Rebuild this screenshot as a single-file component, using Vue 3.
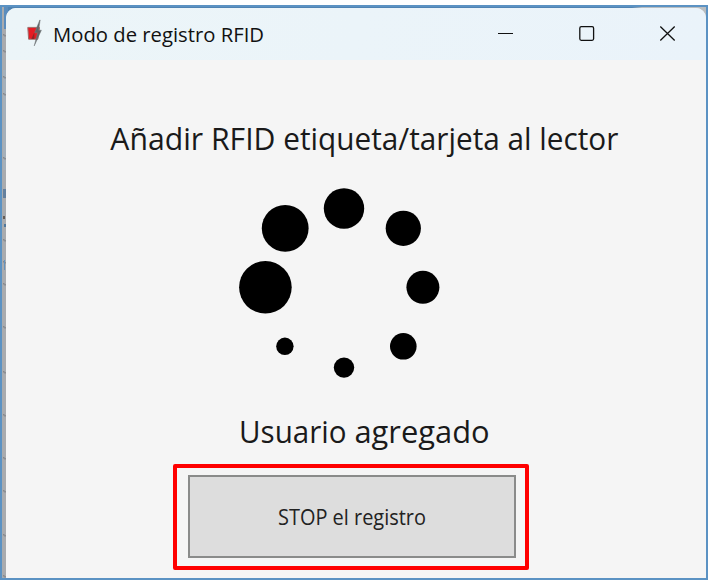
<script setup>
const dots = [
  { x: 344, y: 208.5, r: 20.2 },
  { x: 403.3, y: 228.3, r: 17.6 },
  { x: 422.9, y: 287.3, r: 16.5 },
  { x: 403.3, y: 346.3, r: 13.3 },
  { x: 344, y: 367.6, r: 10.2 },
  { x: 284.9, y: 346.3, r: 8.7 },
  { x: 265.4, y: 287.3, r: 26.3 },
  { x: 285.2, y: 228.3, r: 23.4 },
]
const specks = [34, 50, 76, 93, 157, 239, 261, 283, 326, 371, 414, 457, 490, 534, 575]
const heading = [
  { text: 'Añadir RFID', x: 10.3, w: 165.2 },
  { text: 'etiqueta/tarjeta al lector', x: 183.2, w: 335.2 },
]
const status = [
  { text: 'Usuario', x: 6, w: 107.5 },
  { text: 'agregado', x: 121.4, w: 135.2 },
]
</script>

<template>
  <div class="screen">
    <div class="frame">
      <div class="backdrop">
        <svg class="edge" width="6" height="571" viewBox="2 7 6 571" aria-hidden="true">
          <rect x="2" y="7" width="6" height="571" fill="#a9abae" />
          <rect x="4" y="7" width="4" height="22" fill="#5b8dbd" />
          <rect x="3" y="70" width="3" height="100" fill="#a5b0ba" />
          <g v-for="y in specks" :key="y">
            <rect x="3" :y="y" width="1.5" height="1.5" fill="#85878a" />
            <rect x="4.3" :y="y + 1" width="1.5" height="1.5" fill="#85878c" />
          </g>
          <rect x="3" y="189" width="3" height="9" fill="#64809e" />
          <rect x="3" y="216" width="2" height="3" fill="#665d56" />
          <rect x="4" y="224" width="2" height="3" fill="#50779b" />
          <rect x="4" y="260" width="1" height="10" fill="#6693bd" />
        </svg>
        <div class="window">
          <header class="titlebar">
            <svg class="logo" width="17" height="28" viewBox="26 19 17 28" aria-hidden="true">
              <path d="M27.8 27.4H39.5L37.8 39.2H28.6Z" fill="#e51c24" stroke="#9c706d" stroke-width="1" />
              <path d="M39.8 20L34.6 32.8H37.6L34.2 46L41.4 30.2H38.6L40.2 20Z" fill="#606466" stroke="#777c7e" stroke-width=".5" />
              <path d="M31.3 39L34.3 32.5V39Z" fill="#8d2629" />
            </svg>
            <svg class="title" width="220" height="34">
              <text x="10" y="25" font-size="20" textLength="211" lengthAdjust="spacingAndGlyphs">Modo de registro RFID</text>
            </svg>
            <svg class="controls" width="180" height="28" viewBox="497 19 180 28" fill="none" stroke="#111" stroke-width="1.3" aria-hidden="true">
              <path d="M498 33.5H513" stroke-width="1" />
              <rect x="579.8" y="26.7" width="13.8" height="13.6" rx="1.5" />
              <path d="M660.3 26.5L674.7 40.5M674.7 26.5L660.3 40.5" />
            </svg>
          </header>
          <main class="content">
            <svg class="heading" width="560" height="50">
              <text v-for="p in heading" :key="p.text" :x="p.x" y="35.3" font-size="31.4" :textLength="p.w" lengthAdjust="spacingAndGlyphs">{{ p.text }}</text>
            </svg>
            <svg class="spinner" width="210" height="200" viewBox="234 183 210 200" aria-hidden="true">
              <circle v-for="d in dots" :key="d.x + '-' + d.y" :cx="d.x" :cy="d.y" :r="d.r" />
            </svg>
            <svg class="status" width="290" height="46">
              <text v-for="p in status" :key="p.text" :x="p.x" y="34.8" font-size="31.2" :textLength="p.w" lengthAdjust="spacingAndGlyphs">{{ p.text }}</text>
            </svg>
            <div class="highlight">
              <button class="stop" type="button">
                <svg width="184" height="44">
                  <text x="18" y="29.5" font-size="21.3" textLength="148" lengthAdjust="spacingAndGlyphs">STOP el registro</text>
                </svg>
              </button>
            </div>
          </main>
        </div>
      </div>
    </div>
  </div>
</template>

<style>
body {
  background: #fff;
  overflow: hidden;
}
</style>

<style scoped>
.screen {
  box-sizing: border-box;
  width: 709px;
  height: 586px;
  padding: 5px 1px 6px 0;
  background: #fff;
  font-family: "Open Sans", "Noto Sans", sans-serif;
}
svg {
  display: block;
  flex: none;
  overflow: visible;
}
.frame {
  box-sizing: border-box;
  height: 575px;
  border: 2px solid #5b92c3;
}
.backdrop {
  display: flex;
  height: 571px;
  background: linear-gradient(90deg, #4f83b3 0 630px, #b9bdc0 640px);
}
.edge {
  margin-right: -2px;
}
.window {
  flex: 1;
  margin-top: 1px;
  border-radius: 10px 10px 0 0;
  overflow: hidden;
  background: #f5f5f5;
  position: relative;
}
.titlebar {
  display: flex;
  height: 52px;
  background: linear-gradient(100deg, #ecf5f8, #eaf3fa);
}
.logo {
  margin: 11px 0 0 20px;
}
.title {
  margin: 9px 0 0 0;
  fill: #111;
}
.controls {
  margin: 11px 0 0 234px;
}
.content {
  display: flex;
  flex-direction: column;
  align-items: flex-start;
  fill: #1a1a1a;
}
.heading {
  margin: 55px 0 0 94px;
}
.spinner {
  margin: 18px 0 0 228px;
  fill: #000;
}
.status {
  margin: 25px 0 0 227px;
}
.highlight {
  box-sizing: border-box;
  width: 356px;
  height: 106px;
  margin: 10px 0 0 167px;
  padding: 7px 9px 7px 11px;
  border: 4px solid #f00;
  border-radius: 2px;
}
.stop {
  box-sizing: border-box;
  display: flex;
  align-items: center;
  justify-content: center;
  width: 328px;
  height: 83px;
  padding: 0;
  border: 2px solid #8a8b8a;
  border-radius: 0;
  background: #ddd;
  fill: #222;
  font-family: inherit;
}
</style>
